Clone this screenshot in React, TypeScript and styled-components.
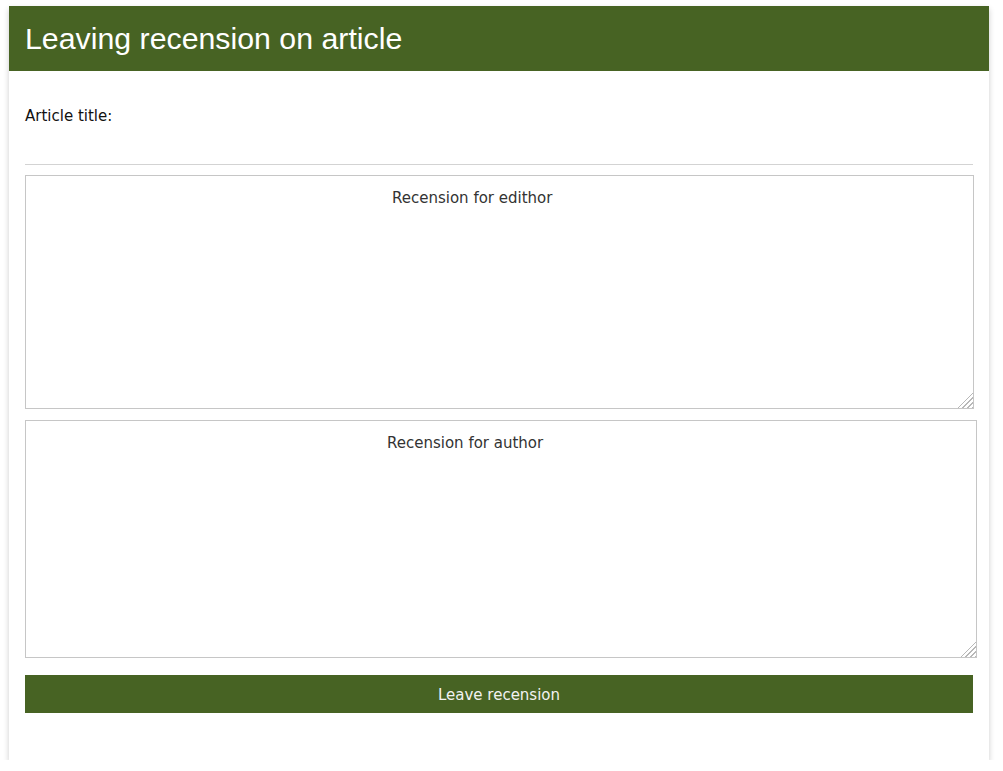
import React from "react";
import styled, { createGlobalStyle } from "styled-components";

const Global = createGlobalStyle`
  html, body { margin: 0; padding: 0; background: #fff; }
  body { font-family: "DejaVu Sans", Verdana, sans-serif; }
`;

const Page = styled.div`
  padding: 6px 14px 0 9px;
`;

const Card = styled.div`
  width: 980px;
  background: #fff;
  box-shadow: 0 3px 6px rgba(0, 0, 0, 0.2);
  padding-bottom: 47px;
`;

const Header = styled.div`
  height: 65px;
  background: #476323;
  display: flex;
  align-items: center;
  padding: 0 16px;
`;

const Title = styled.h1`
  margin: 0;
  font-family: "Liberation Sans", Arial, sans-serif;
  font-weight: normal;
  font-size: 30.3px;
  color: #fff;
`;

const Body = styled.div`
  padding: 0 16px;
  display: flex;
  flex-direction: column;
`;

const Label = styled.div`
  margin-top: 35px;
  font-size: 15px;
  color: #111;
  line-height: 20px;
`;

const Rule = styled.hr`
  margin: 38px 0 10px;
  border: 0;
  border-top: 1px solid #d3d3d3;
  height: 0;
`;

const Area = styled.textarea<{ $w: number; $h: number; $indent: number }>`
  box-sizing: border-box;
  width: ${(p) => p.$w}px;
  height: ${(p) => p.$h}px;
  border: 1px solid #c6c6c6;
  font-family: "DejaVu Sans", Verdana, sans-serif;
  font-size: 15px;
  color: #333;
  padding: 12px 0 0 ${(p) => p.$indent}px;
  margin: 0 0 11px 0;
  outline: none;
  resize: both;
  line-height: 20px;

  &::-webkit-scrollbar {
    width: 15px;
    height: 15px;
    background: transparent;
  }
  &::-webkit-resizer {
    background-color: transparent;
    background-image:
      linear-gradient(135deg, #fff 50%, transparent 50%),
      repeating-linear-gradient(135deg, #fff 0 2.2px, #b8b8b8 2.2px 3.6px);
  }
`;

const Button = styled.button`
  margin-top: 6px;
  height: 38px;
  width: 948px;
  border: 0;
  background: #476323;
  color: #f2f2f2;
  font-family: "DejaVu Sans", Verdana, sans-serif;
  font-size: 15px;
  padding: 2px 0 0;
  cursor: pointer;
`;

export default function App() {
  return (
    <>
      <Global />
      <Page>
        <Card>
          <Header>
            <Title>Leaving recension on article</Title>
          </Header>
          <Body>
            <Label>Article title:</Label>
            <Rule />
            <Area $w={949} $h={234} $indent={366} defaultValue="Recension for edithor" />
            <Area $w={952} $h={238} $indent={361} defaultValue="Recension for author" />
            <Button>Leave recension</Button>
          </Body>
        </Card>
      </Page>
    </>
  );
}
